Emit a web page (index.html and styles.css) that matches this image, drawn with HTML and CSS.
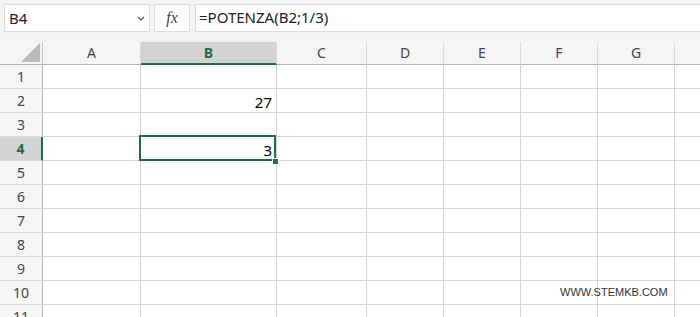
FILE: index.html
```html
<!DOCTYPE html>
<html lang="it">
<head>
    <meta charset="UTF-8">
    <title>POTENZA</title>
    <link rel="stylesheet" href="styles.css">
</head>
<body>
    <div class="formula-row">
        <div class="name-box">
            <span>B4</span>
            <svg class="chev" width="8" height="5" viewBox="0 0 8 5"><path d="M1 1 L4 4 L7 1" fill="none" stroke="#555" stroke-width="1.2"/></svg>
        </div>
        <div class="fx-box"><span>fx</span></div>
        <div class="formula-box">=POTENZA(B2;1/3)</div>
    </div>

    <div class="sheet">
        <div class="grid">
            <div class="corner"><div class="tri"></div></div>
            <div class="colhead">A</div>
            <div class="colhead active">B</div>
            <div class="colhead">C</div>
            <div class="colhead">D</div>
            <div class="colhead">E</div>
            <div class="colhead">F</div>
            <div class="colhead">G</div>
            <div class="colhead"></div>

            <div class="rowhead">1</div><div class="cell"></div><div class="cell"></div><div class="cell"></div><div class="cell"></div><div class="cell"></div><div class="cell"></div><div class="cell"></div><div class="cell"></div>
            <div class="rowhead">2</div><div class="cell"></div><div class="cell num">27</div><div class="cell"></div><div class="cell"></div><div class="cell"></div><div class="cell"></div><div class="cell"></div><div class="cell"></div>
            <div class="rowhead">3</div><div class="cell"></div><div class="cell"></div><div class="cell"></div><div class="cell"></div><div class="cell"></div><div class="cell"></div><div class="cell"></div><div class="cell"></div>
            <div class="rowhead active">4</div><div class="cell"></div><div class="cell num">3</div><div class="cell"></div><div class="cell"></div><div class="cell"></div><div class="cell"></div><div class="cell"></div><div class="cell"></div>
            <div class="rowhead">5</div><div class="cell"></div><div class="cell"></div><div class="cell"></div><div class="cell"></div><div class="cell"></div><div class="cell"></div><div class="cell"></div><div class="cell"></div>
            <div class="rowhead">6</div><div class="cell"></div><div class="cell"></div><div class="cell"></div><div class="cell"></div><div class="cell"></div><div class="cell"></div><div class="cell"></div><div class="cell"></div>
            <div class="rowhead">7</div><div class="cell"></div><div class="cell"></div><div class="cell"></div><div class="cell"></div><div class="cell"></div><div class="cell"></div><div class="cell"></div><div class="cell"></div>
            <div class="rowhead">8</div><div class="cell"></div><div class="cell"></div><div class="cell"></div><div class="cell"></div><div class="cell"></div><div class="cell"></div><div class="cell"></div><div class="cell"></div>
            <div class="rowhead">9</div><div class="cell"></div><div class="cell"></div><div class="cell"></div><div class="cell"></div><div class="cell"></div><div class="cell"></div><div class="cell"></div><div class="cell"></div>
            <div class="rowhead">10</div><div class="cell"></div><div class="cell"></div><div class="cell"></div><div class="cell"></div><div class="cell"></div><div class="cell"></div><div class="cell"></div><div class="cell"></div>
            <div class="rowhead">11</div><div class="cell"></div><div class="cell"></div><div class="cell"></div><div class="cell"></div><div class="cell"></div><div class="cell"></div><div class="cell"></div><div class="cell"></div>
        </div>
        <div class="selection"></div>
        <div class="handle"></div>
        <div class="watermark">WWW.STEMKB.COM</div>
    </div>
</body>
</html>
```

FILE: styles.css
```css
* {
    box-sizing: border-box;
}
body {
    margin: 0;
    width: 700px;
    height: 317px;
    overflow: hidden;
    background: #f3f3f3;
    font-family: "Noto Sans", "Open Sans", sans-serif;
    color: #222;
}
.formula-row {
    display: flex;
    height: 42px;
    padding: 4px 0 0 4px;
}
.name-box {
    width: 146px;
    height: 28px;
    background: #fff;
    border: 1px solid #dcdcdc;
    display: flex;
    align-items: center;
    justify-content: space-between;
    padding: 0 4px 0 4px;
    font-size: 15px;
}
.chev {
    margin-right: 0;
}
.fx-box {
    width: 36px;
    height: 28px;
    margin-left: 4px;
    background: #fff;
    border: 1px solid #dcdcdc;
    display: flex;
    align-items: center;
    justify-content: center;
}
.fx-box span {
    font-family: "Liberation Serif", serif;
    font-style: italic;
    font-size: 16px;
    color: #444;
}
.formula-box {
    flex: 1;
    height: 28px;
    margin-left: 5px;
    background: #fff;
    border: 1px solid #dcdcdc;
    border-right: none;
    padding: 0 0 0 3px;
    font-size: 15px;
    line-height: 25px;
}
.sheet {
    position: relative;
}
.grid {
    display: grid;
    grid-template-columns: 43px 98px 136px 90px 77px 77px 77px 77px 60px;
    grid-template-rows: 23px repeat(11, 24px);
    background: #fff;
}
.corner {
    background: #f5f5f5;
    border-right: 1px solid #c6c6c6;
    border-bottom: 1px solid #b4b4b4;
    position: relative;
}
.tri {
    position: absolute;
    right: 2px;
    bottom: 2px;
    width: 0;
    height: 0;
    border-left: 19px solid transparent;
    border-bottom: 19px solid #b9b9b9;
}
.colhead {
    background: #f5f5f5;
    border-right: 1px solid #dadada;
    border-bottom: 1px solid #b4b4b4;
    font-size: 14px;
    color: #444;
    text-align: center;
    line-height: 22px;
}
.colhead.active {
    background: #d3d3d3;
    border-bottom: 2px solid #1e6f42;
    color: #1e6f42;
    font-weight: bold;
}
.rowhead {
    background: #f5f5f5;
    border-right: 1px solid #b4b4b4;
    border-bottom: 1px solid #dadada;
    font-size: 14px;
    color: #444;
    text-align: center;
    line-height: 23px;
}
.rowhead.active {
    background: #d3d3d3;
    border-right: 2px solid #1e6f42;
    color: #1e6f42;
    font-weight: bold;
}
.cell {
    border-right: 1px solid #d4d4d4;
    border-bottom: 1px solid #d4d4d4;
    font-size: 15px;
    line-height: 27px;
    color: #000;
}
.num {
    text-align: right;
    padding-right: 4px;
}
.selection {
    position: absolute;
    left: 139px;
    top: 93px;
    width: 137px;
    height: 26px;
    border: 2px solid #1e6f42;
}
.handle {
    position: absolute;
    left: 272px;
    top: 116px;
    width: 7px;
    height: 7px;
    background: #1e6f42;
    border: 1px solid #fff;
}
.watermark {
    position: absolute;
    left: 560px;
    top: 244px;
    font-family: "Liberation Sans", Arial, sans-serif;
    font-size: 11px;
    color: #333;
}
```
